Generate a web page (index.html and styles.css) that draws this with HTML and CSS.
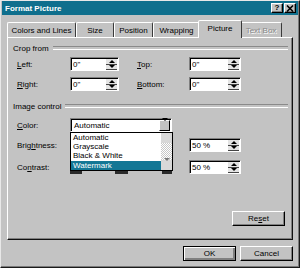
FILE: index.html
```html
<!DOCTYPE html>
<html lang="en">
<head>
    <meta charset="UTF-8">
    <title>Format Picture</title>
    <link rel="stylesheet" href="styles.css">
</head>
<body>
    <div class="dialog">
        <div class="titlebar">
            <span class="title">Format Picture</span>
            <span class="tbtns">
                <span class="tbtn">?</span>
                <span class="tbtn">
                    <svg width="8" height="7" viewBox="0 0 8 7"><path d="M1 0.5 L7 6.5 M7 0.5 L1 6.5" stroke="#000" stroke-width="1.6"/></svg>
                </span>
            </span>
        </div>

        <div class="tabs">
            <span class="tab t-colors">Colors and Lines</span>
            <span class="tab t-size">Size</span>
            <span class="tab t-position">Position</span>
            <span class="tab t-wrapping">Wrapping</span>
            <span class="tab t-picture active">Picture</span>
            <span class="tab t-textbox disabled">Text Box</span>
        </div>

        <div class="panel">
            <div class="group-head"><span>Crop from</span></div>
            <div class="crop-grid">
                <label><u>L</u>eft:</label>
                <div class="spin w49"><span class="val">0"</span><span class="arrows"><i class="up"></i><i class="down"></i></span></div>
                <label><u>T</u>op:</label>
                <div class="spin"><span class="val">0"</span><span class="arrows"><i class="up"></i><i class="down"></i></span></div>

                <label><u>R</u>ight:</label>
                <div class="spin w49"><span class="val">0"</span><span class="arrows"><i class="up"></i><i class="down"></i></span></div>
                <label><u>B</u>ottom:</label>
                <div class="spin"><span class="val">0"</span><span class="arrows"><i class="up"></i><i class="down"></i></span></div>
            </div>

            <div class="group-head image-head"><span>Image control</span></div>
            <div class="img-rows">
                <div class="img-row">
                    <label><u>C</u>olor:</label>
                    <div class="combo">
                        <span class="val">Automatic</span>
                        <span class="drop"><i class="down"></i></span>
                        <div class="droplist">
                            <div class="items">
                                <div class="item">Automatic</div>
                                <div class="item">Grayscale</div>
                                <div class="item">Black &amp; White</div>
                                <div class="item sel">Watermark</div>
                            </div>
                            <div class="scroll">
                                <span class="sbtn"><i class="up grey"></i></span>
                                <span class="track"></span>
                                <span class="sbtn"><i class="down grey"></i></span>
                            </div>
                        </div>
                    </div>
                </div>
                <div class="img-row row-bright">
                    <label>Brig<u>h</u>tness:</label>
                    <div class="slider"><span class="sl-btn"></span><span class="thumb"></span><span class="sl-btn end"></span></div>
                    <div class="spin"><span class="val">50 %</span><span class="arrows"><i class="up"></i><i class="down"></i></span></div>
                </div>
                <div class="img-row row-contrast">
                    <label>Co<u>n</u>trast:</label>
                    <div class="slider"><span class="sl-btn"></span><span class="thumb"></span><span class="sl-btn end"></span></div>
                    <div class="spin"><span class="val">50 %</span><span class="arrows"><i class="up"></i><i class="down"></i></span></div>
                </div>
            </div>

            <div class="reset-row">
                <button class="btn reset">Re<u>s</u>et</button>
            </div>
        </div>

        <div class="footer">
            <button class="btn default">OK</button>
            <button class="btn">Cancel</button>
        </div>
    </div>
</body>
</html>
```

FILE: styles.css
```css
* {
    box-sizing: border-box;
}

body {
    margin: 0;
    background: #c3c3c3;
    font-family: "Liberation Sans", Arial, sans-serif;
    font-size: 8px;
    color: #000;
}

.dialog {
    width: 300px;
    height: 268px;
    background: #c3c3c3;
    border: 1px solid;
    border-color: #e8e8e8 #1a1a1a #1a1a1a #e8e8e8;
    box-shadow: inset -1px -1px #7a7a7a;
    padding: 0 1px 1px 1px;
}

/* title bar */
.titlebar {
    height: 14px;
    background: #0f6f8d;
    color: #fff;
    display: flex;
    align-items: center;
    justify-content: space-between;
    padding: 0 2px 0 3px;
}

.title {
    font-weight: bold;
    font-size: 8px;
}

.tbtns {
    display: flex;
    gap: 1px;
}

.tbtn {
    width: 12px;
    height: 10px;
    background: #c3c3c3;
    border: 1px solid;
    border-color: #fff #000 #000 #fff;
    box-shadow: inset -1px -1px #808080;
    color: #000;
    font-weight: bold;
    font-size: 8px;
    line-height: 8px;
    display: flex;
    align-items: center;
    justify-content: center;
}

/* tabs */
.tabs {
    display: flex;
    align-items: flex-end;
    height: 17px;
    margin: 5px 0 0 5px;
}

.tab {
    height: 15px;
    padding: 0;
    border: 1px solid;
    border-bottom: none;
    border-color: #fff #3a3a3a transparent #fff;
    border-radius: 2px 2px 0 0;
    display: flex;
    align-items: center;
    justify-content: center;
    white-space: nowrap;
}

.t-colors { width: 69px; }
.t-size { width: 38px; }
.t-position { width: 39px; }
.t-wrapping { width: 47px; }
.t-picture { width: 44px; }
.t-textbox { width: 42px; }

.tab.active {
    height: 18px;
    margin: 0 -2px -1px;
    background: #c3c3c3;
    position: relative;
    z-index: 2;
    padding-bottom: 2px;
}

.tab.disabled {
    color: #8a8a8a;
    text-shadow: 1px 1px #fff;
}

/* panel */
.panel {
    height: 203px;
    margin: 0 5px;
    border: 1px solid;
    border-color: #fff #111 #111 #fff;
    box-shadow: inset -1px -1px #808080;
    padding: 0 7px 0 9px;
    position: relative;
}

.group-head {
    display: flex;
    align-items: center;
    gap: 4px;
    height: 10px;
    margin: 5px -3px 0 -4px;
}

.group-head::after {
    content: "";
    flex: 1;
    height: 2px;
    border-top: 1px solid #8a8a8a;
    border-bottom: 1px solid #fff;
}

.image-head {
    margin-top: 10px;
}

.crop-grid {
    display: grid;
    grid-template-columns: 53px 67px 52px 52px;
    grid-auto-rows: 14px;
    row-gap: 6px;
    margin-top: 4px;
    align-items: center;
}

label u {
    text-decoration-thickness: 1px;
}

/* spin box */
.spin {
    width: 52px;
    height: 14px;
    background: #fff;
    border: 1px solid;
    border-color: #808080 #fff #fff #808080;
    box-shadow: inset 1px 1px #000;
    display: flex;
    align-items: center;
    justify-content: space-between;
    padding: 1px 1px 0 2px;
}

.spin.w49 {
    width: 49px;
}

.arrows {
    width: 11px;
    height: 11px;
    display: flex;
    flex-direction: column;
}

.arrows i {
    flex: 1;
    background: #e4e4e4;
    border-bottom: 1px solid #444;
    display: flex;
    align-items: center;
    justify-content: center;
}

i.up::before,
i.down::before {
    content: "";
    border-left: 3px solid transparent;
    border-right: 3px solid transparent;
}

i.up::before {
    border-bottom: 3px solid #000;
}

i.down::before {
    border-top: 3px solid #000;
}

i.grey.up::before {
    border-bottom-color: #9a9a9a;
}

i.grey.down::before {
    border-top-color: #7a7a7a;
}

/* image control rows */
.img-rows {
    margin-top: 7px;
}

.img-row {
    display: grid;
    grid-template-columns: 53px 119px 52px;
    height: 14px;
    align-items: center;
}

.row-bright {
    margin-top: 6px;
}

.row-contrast {
    margin-top: 8px;
}

.combo {
    width: 102px;
    height: 14px;
    background: #fff;
    border: 1px solid;
    border-color: #808080 #fff #fff #808080;
    box-shadow: inset 1px 1px #000;
    display: flex;
    align-items: center;
    justify-content: space-between;
    padding: 1px 1px 0 3px;
    position: relative;
}

.drop {
    width: 11px;
    height: 11px;
    background: #c3c3c3;
    border: 1px solid;
    border-color: #fff #000 #000 #fff;
    display: flex;
    align-items: center;
    justify-content: center;
}

.droplist {
    position: absolute;
    top: 13px;
    left: -1px;
    width: 103px;
    height: 39px;
    background: #fff;
    border: 1px solid #000;
    display: flex;
    z-index: 5;
}

.items {
    flex: 1;
}

.item {
    height: 9px;
    line-height: 9px;
    padding-left: 2px;
}

.item.sel {
    background: #137795;
    color: #fff;
    margin-top: 1px;
}

.scroll {
    width: 11px;
    display: flex;
    flex-direction: column;
}

.sbtn {
    height: 10px;
    background: #d8d8d8;
    display: flex;
    align-items: center;
    justify-content: center;
}

.track {
    flex: 1;
    background: repeating-conic-gradient(#fff 0 25%, #c8c8c8 0 50%) 0 0 / 2px 2px;
}

.slider {
    width: 102px;
    height: 13px;
    display: flex;
    align-items: stretch;
}

.sl-btn {
    width: 12px;
    border-bottom: 3px solid #2a2a2a;
    background: #c3c3c3;
}

.sl-btn.end {
    width: 10px;
    margin-left: auto;
}

.thumb {
    width: 13px;
    margin-left: 33px;
    border-bottom: 3px solid #2a2a2a;
}

/* buttons */
.btn {
    font-family: "Liberation Sans", Arial, sans-serif;
    font-size: 8px;
    color: #000;
    width: 53px;
    height: 15px;
    padding: 0;
    background: #c3c3c3;
    border: 1px solid;
    border-color: #fff #000 #000 #fff;
    box-shadow: inset -1px -1px #808080;
}

.btn.default {
    border: 1px solid #000;
    box-shadow: inset 1px 1px #fff, inset -2px -2px #808080;
}

.reset-row {
    display: flex;
    justify-content: flex-end;
    margin-top: 37px;
}

.footer {
    display: flex;
    justify-content: flex-end;
    gap: 4px;
    margin: 6px 5px 0 0;
}
```
